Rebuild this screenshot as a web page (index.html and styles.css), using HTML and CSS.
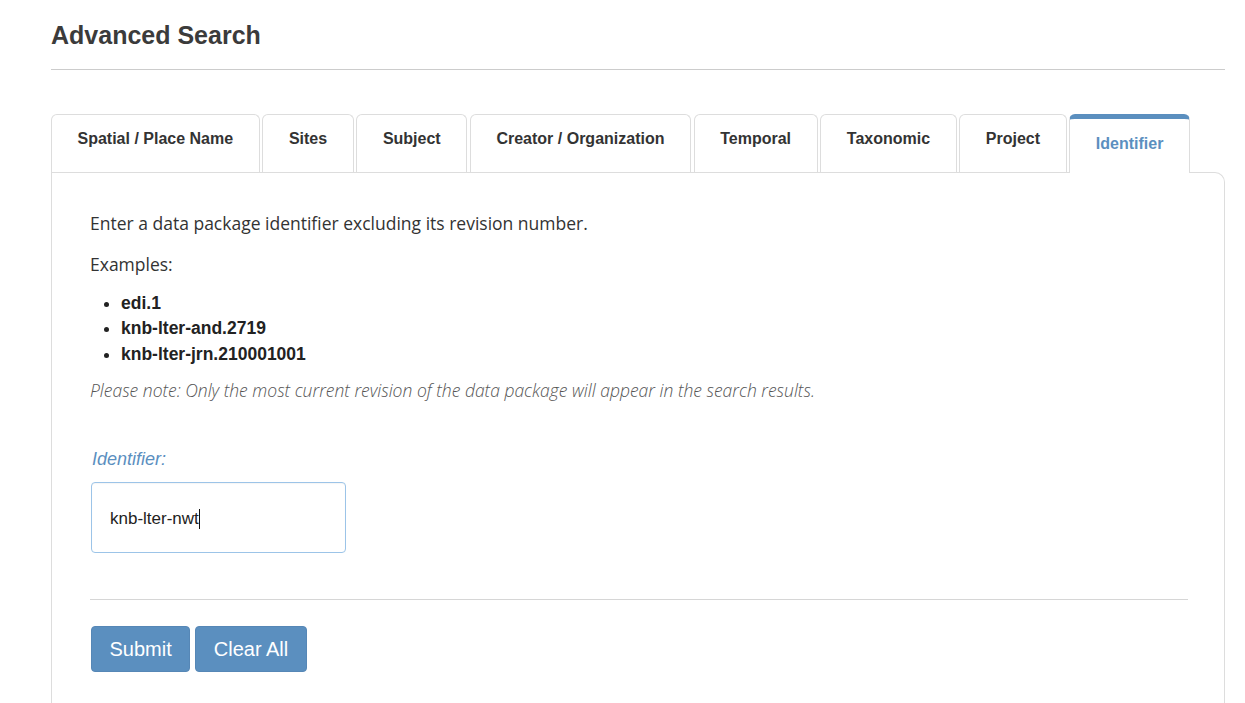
FILE: index.html
```html
<!DOCTYPE html>
<html lang="en">
<head>
<meta charset="utf-8">
<title>Advanced Search</title>
<link rel="stylesheet" href="styles.css">
</head>
<body>
<div class="page">
  <h1 class="title">Advanced Search</h1>
  <div class="rule"></div>
  <ul class="tabs">
    <li class="tab">Spatial / Place Name</li>
    <li class="tab">Sites</li>
    <li class="tab">Subject</li>
    <li class="tab">Creator / Organization</li>
    <li class="tab">Temporal</li>
    <li class="tab">Taxonomic</li>
    <li class="tab">Project</li>
    <li class="tab active">Identifier</li>
  </ul>
  <div class="panel">
    <p class="intro">Enter a data package identifier excluding its revision number.</p>
    <p class="examples">Examples:</p>
    <ul class="list">
      <li>edi.1</li>
      <li>knb-lter-and.2719</li>
      <li>knb-lter-jrn.210001001</li>
    </ul>
    <p class="note">Please note: Only the most current revision of the data package will appear in the search results.</p>
    <label class="label" for="ident">Identifier:</label>
    <div class="field"><span class="value">knb-lter-nwt</span><span class="caret"></span></div>
    <div class="divider"></div>
    <div class="actions">
      <button class="btn">Submit</button>
      <button class="btn">Clear All</button>
    </div>
  </div>
</div>
</body>
</html>
```

FILE: styles.css
```css
html, body {
  margin: 0;
  padding: 0;
  background: #ffffff;
}
body {
  font-family: "Open Sans", "Liberation Sans", sans-serif;
  color: #333333;
  height: 703px;
  overflow: hidden;
}
.page {
  padding: 20px 20px 0 51px;
}
.title {
  margin: 0 0 19px 0;
  font-family: "Liberation Sans", Arial, sans-serif;
  font-size: 25px;
  line-height: 30px;
  font-weight: bold;
  color: #3b3b3b;
}
.rule {
  height: 1px;
  background: #cccccc;
  margin-bottom: 44px;
}
.tabs {
  list-style: none;
  margin: 0;
  padding: 0;
  display: flex;
  align-items: flex-end;
  gap: 2.75px;
}
.tab {
  font-family: "Liberation Sans", Arial, sans-serif;
  font-size: 16px;
  font-weight: bold;
  line-height: 20px;
  color: #333333;
  padding: 14px 25.5px 23px 25.5px;
  border: 1px solid #dddddd;
  border-bottom: none;
  border-radius: 6px 6px 0 0;
  background: #ffffff;
}
.tab.active {
  color: #5b8fbf;
  border-top: 5px solid #5b8fbf;
  padding: 15px 25.5px 19px 25.5px;
  margin-bottom: -1px;
  position: relative;
  z-index: 1;
}
.panel {
  border: 1px solid #dddddd;
  border-bottom: none;
  border-radius: 0 10px 0 0;
  padding: 38px 36px 40px 38px;
  min-height: 600px;
}
.intro, .examples {
  margin: 0;
  font-size: 17.5px;
  line-height: 25px;
}
.examples {
  margin-top: 16px;
}
.list {
  margin: 13.5px 0 0 0;
  padding-left: 31px;
  font-family: "Liberation Sans", Arial, sans-serif;
  font-weight: bold;
  font-size: 17.5px;
  line-height: 25.5px;
  color: #222222;
}
.note {
  margin: 11px 0 0 0;
  font-style: italic;
  font-weight: 300;
  font-size: 17.5px;
  line-height: 25px;
  color: #555555;
}
.label {
  display: block;
  margin-top: 45px;
  font-family: "Liberation Sans", Arial, sans-serif;
  font-style: italic;
  font-size: 18px;
  line-height: 22px;
  color: #5b8fbf;
  padding-left: 2px;
}
.field {
  margin-top: 12px;
  margin-left: 1px;
  width: 255px;
  height: 71px;
  box-sizing: border-box;
  border: 1px solid #9cc4e8;
  border-radius: 4px;
  display: flex;
  align-items: center;
  padding-left: 18px;
  padding-top: 2px;
  box-shadow: inset 0 1px 1px rgba(0,0,0,0.04);
  font-family: "Liberation Sans", Arial, sans-serif;
  font-size: 17px;
  color: #222222;
}
.caret {
  display: inline-block;
  width: 1px;
  height: 20px;
  background: #111111;
}
.divider {
  margin-top: 46px;
  height: 1px;
  background: #d6d6d6;
}
.actions {
  margin-top: 26px;
  display: flex;
  gap: 5px;
  padding-left: 1px;
}
.btn {
  font-family: "Liberation Sans", Arial, sans-serif;
  font-size: 20px;
  line-height: 24px;
  color: #ffffff;
  background: #5b8fbf;
  border: 1px solid #5687b6;
  border-radius: 4px;
  padding: 10px 17.5px;
  cursor: pointer;
}
```
